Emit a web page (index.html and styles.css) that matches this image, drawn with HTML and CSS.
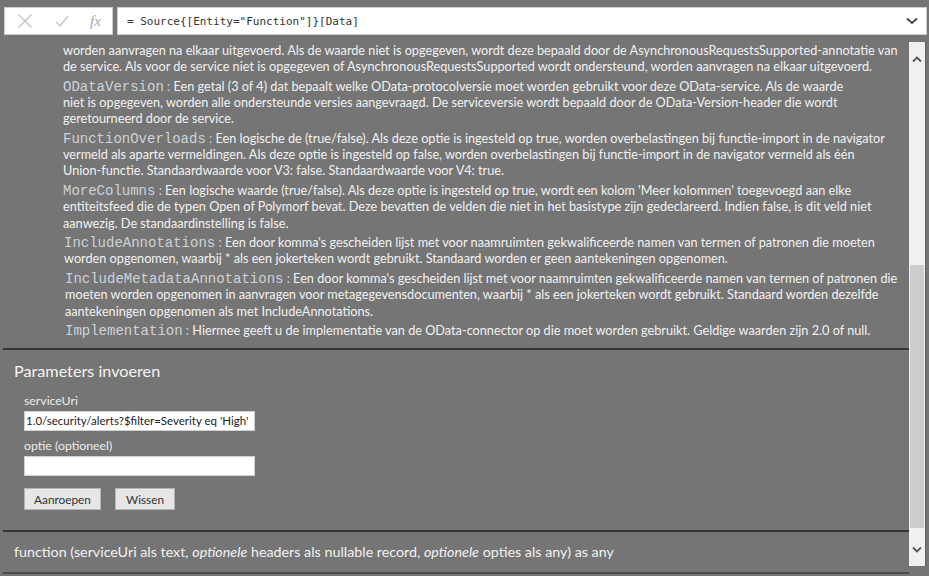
FILE: index.html
```html
<!DOCTYPE html>
<html lang="nl">
<head>
<meta charset="utf-8">
<title>Functie aanroepen</title>
<link rel="stylesheet" href="styles.css">
</head>
<body>
<div class="app">
  <div class="formula-bar">
    <div class="fb-tools">
      <svg class="fb-icon" width="16" height="16" viewBox="0 0 16 16"><path d="M1.5 1.5 L14.5 14.5 M14.5 1.5 L1.5 14.5" stroke="#c4c4c4" stroke-width="1.4" fill="none"/></svg>
      <svg class="fb-icon" width="16" height="16" viewBox="0 0 16 16"><path d="M2 9 L6 13 L14 3" stroke="#c4c4c4" stroke-width="1.4" fill="none"/></svg>
      <span class="fb-fx">fx</span>
    </div>
    <div class="fb-input">
      <span class="fb-code">= Source{[Entity="Function"]}[Data]</span>
      <svg class="fb-chevron" width="12" height="8" viewBox="0 0 12 8"><path d="M1 1.5 L6 6 L11 1.5" stroke="#444" stroke-width="1.8" fill="none"/></svg>
    </div>
  </div>
  <div class="main">
    <div class="pane">
      <div class="doc">
        <p>worden aanvragen na elkaar uitgevoerd. Als de waarde niet is opgegeven, wordt deze bepaald door de AsynchronousRequestsSupported-annotatie van<br>de service. Als voor de service niet is opgegeven of AsynchronousRequestsSupported wordt ondersteund, worden aanvragen na elkaar uitgevoerd.</p>
        <p><span class="opt"><code>ODataVersion</code> :</span> Een getal (3 of 4) dat bepaalt welke OData-protocolversie moet worden gebruikt voor deze OData-service. Als de waarde<br>niet is opgegeven, worden alle ondersteunde versies aangevraagd. De serviceversie wordt bepaald door de OData-Version-header die wordt<br>geretourneerd door de service.</p>
        <p><span class="opt"><code>FunctionOverloads</code> :</span> Een logische de (true/false). Als deze optie is ingesteld op true, worden overbelastingen bij functie-import in de navigator<br>vermeld als aparte vermeldingen. Als deze optie is ingesteld op false, worden overbelastingen bij functie-import in de navigator vermeld als één<br>Union-functie. Standaardwaarde voor V3: false. Standaardwaarde voor V4: true.</p>
        <p><span class="opt"><code>MoreColumns</code> :</span> Een logische waarde (true/false). Als deze optie is ingesteld op true, wordt een kolom 'Meer kolommen' toegevoegd aan elke<br>entiteitsfeed die de typen Open of Polymorf bevat. Deze bevatten de velden die niet in het basistype zijn gedeclareerd. Indien false, is dit veld niet<br>aanwezig. De standaardinstelling is false.</p>
        <p class="indent1"><span class="opt"><code>IncludeAnnotations</code> :</span> Een door komma's gescheiden lijst met voor naamruimten gekwalificeerde namen van termen of patronen die moeten<br>worden opgenomen, waarbij * als een jokerteken wordt gebruikt. Standaard worden er geen aantekeningen opgenomen.</p>
        <p class="indent2"><span class="opt"><code>IncludeMetadataAnnotations</code> :</span> Een door komma's gescheiden lijst met voor naamruimten gekwalificeerde namen van termen of patronen die<br>moeten worden opgenomen in aanvragen voor metagegevensdocumenten, waarbij * als een jokerteken wordt gebruikt. Standaard worden dezelfde<br>aantekeningen opgenomen als met IncludeAnnotations.</p>
        <p class="indent2"><span class="opt"><code>Implementation</code> :</span> Hiermee geeft u de implementatie van de OData-connector op die moet worden gebruikt. Geldige waarden zijn 2.0 of null.</p>
      </div>
      <section class="params">
        <h2 class="params-title">Parameters invoeren</h2>
        <div class="fields">
          <label class="field-label">serviceUri</label>
          <div class="text-input">1.0/security/alerts?$filter=Severity eq 'High'</div>
          <label class="field-label">optie (optioneel)</label>
          <div class="text-input"></div>
          <div class="buttons">
            <button class="btn btn-invoke">Aanroepen</button>
            <button class="btn btn-clear">Wissen</button>
          </div>
        </div>
      </section>
      <footer class="signature">function (serviceUri als text, <em>optionele</em> headers als nullable record, <em>optionele</em> opties als any) as any</footer>
    </div>
    <div class="scrollbar">
      <div class="sb-arrow">
        <svg width="10" height="7" viewBox="0 0 10 7"><path d="M1 5.5 L5 1.5 L9 5.5" stroke="#555" stroke-width="1.8" fill="none"/></svg>
      </div>
      <div class="sb-track"><div class="sb-thumb"></div></div>
      <div class="sb-arrow">
        <svg width="10" height="7" viewBox="0 0 10 7"><path d="M1 1.5 L5 5.5 L9 1.5" stroke="#555" stroke-width="1.8" fill="none"/></svg>
      </div>
    </div>
  </div>
</div>
</body>
</html>
```
FILE: styles.css
```css
html, body {
  margin: 0;
  padding: 0;
  background: #757575;
}
body {
  font-family: "Lato", "Open Sans", sans-serif;
  font-size: 12.7px;
  color: #f2f2f2;
}
.app {
  width: 929px;
  height: 576px;
  display: flex;
  flex-direction: column;
  overflow: hidden;
}

/* formula bar */
.formula-bar {
  height: 42px;
  flex: none;
  display: flex;
  align-items: flex-start;
  padding: 7px 2px 0 4px;
  box-sizing: border-box;
  gap: 4px;
}
.fb-tools {
  width: 109px;
  height: 28px;
  box-sizing: border-box;
  background: #fff;
  border: 1px solid #cfcfcf;
  display: flex;
  align-items: center;
  padding-left: 12px;
}
.fb-icon { flex: none; }
.fb-icon + .fb-icon { margin-left: 21px; }
.fb-fx {
  margin-left: 20px;
  font-family: "Liberation Serif", serif;
  font-style: italic;
  font-size: 15px;
  color: #a8a8a8;
}
.fb-input {
  flex: 1;
  height: 28px;
  box-sizing: border-box;
  background: #fff;
  border: 1px solid #cfcfcf;
  display: flex;
  align-items: center;
  padding: 0 8px 0 9px;
}
.fb-code {
  flex: 1;
  font-family: "DejaVu Sans Mono", monospace;
  font-size: 11px;
  color: #333;
}

/* main */
.main {
  flex: 1;
  display: flex;
  min-height: 0;
  padding-right: 3px;
  background: #757575;
}
.pane {
  flex: 1;
  display: flex;
  flex-direction: column;
  min-width: 0;
  padding-left: 3px;
}
.doc {
  height: 306px;
  flex: none;
  overflow: hidden;
  padding-left: 60px;
  white-space: nowrap;
  line-height: 16.2px;
}
.doc p {
  margin: 0 0 3.5px;
}
.doc .indent1 { padding-left: 1px; }
.doc .indent2 { padding-left: 2px; }
.opt {
  color: #cdd3d9;
}
.opt code {
  font-family: "Liberation Mono", "Courier New", monospace;
  font-size: 14px;
  line-height: 0;
}

.params {
  flex: none;
  height: 182px;
  box-sizing: border-box;
  border-top: 2px solid #353535;
  padding: 11px 0 0 11px;
}
.params-title {
  margin: 0;
  font-weight: normal;
  font-size: 16.2px;
  line-height: 20px;
  color: #f4f4f4;
}
.fields {
  padding-left: 10px;
  display: flex;
  flex-direction: column;
  align-items: flex-start;
}
.field-label {
  display: block;
  font-size: 12.3px;
  line-height: 16px;
  color: #ececec;
  margin-top: 12px;
  margin-bottom: 2px;
}
.text-input + .field-label { margin-top: 7px; }
.text-input {
  width: 231px;
  height: 20px;
  box-sizing: border-box;
  background: #fff;
  border: 1px solid #d0d0d0;
  color: #222;
  font-size: 11.5px;
  line-height: 18px;
  padding: 0 0 0 1px;
  white-space: nowrap;
  overflow: hidden;
}
.buttons {
  display: flex;
  gap: 14px;
  margin-top: 12px;
}
.btn {
  height: 22px;
  box-sizing: border-box;
  background: #e6e6e6;
  border: 1px solid #b5b5b5;
  border-radius: 0;
  font-family: "Lato", sans-serif;
  font-size: 11.8px;
  color: #333;
  padding: 0;
}
.btn-invoke { width: 77px; }
.btn-clear { width: 60px; }

.signature {
  flex: none;
  height: 44px;
  box-sizing: border-box;
  border-top: 2px solid #353535;
  border-bottom: 2px solid #4a4a4a;
  padding: 12px 0 0 11px;
  font-size: 14.3px;
  line-height: 16px;
  color: #f2f2f2;
  white-space: nowrap;
}
.signature em { font-style: italic; }

/* scrollbar */
.scrollbar {
  width: 16px;
  flex: none;
  height: 524px;
  background: #f0f0f0;
  display: flex;
  flex-direction: column;
  border-right: 1px solid #5f5f5f;
}
.sb-arrow {
  height: 34px;
  flex: none;
  display: flex;
  align-items: center;
  justify-content: center;
}
.sb-track {
  flex: 1;
  display: flex;
  flex-direction: column;
  padding-top: 189px;
}
.sb-thumb {
  height: 263px;
  margin: 0 1px;
  background: #cdcdcd;
}
```
